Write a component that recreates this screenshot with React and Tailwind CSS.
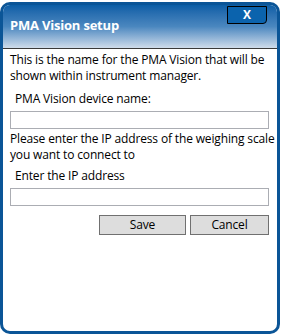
export default function App() {
  return (
    <div className="w-[282px] h-[336px] bg-white pt-[2px]" style={{ fontFamily: '"Open Sans", "Noto Sans", sans-serif' }}>
      <div className="relative w-[280px] h-[332px] border-[3px] border-[#0b5597] rounded-[10px] overflow-hidden bg-white flex flex-col">
        {/* Title bar */}
        <div className="h-[44px] shrink-0 bg-gradient-to-b from-[#0a5ea6] via-[#4a87bf] to-[#cfdcea] border-b border-[#3a3a3a] pl-[7px] pt-[7px]">
          <span className="text-white font-bold text-[13px] tracking-[-0.2px]">PMA Vision setup</span>
        </div>
        <div className="absolute left-[224px] top-[1px] w-[40px] h-[18px] border border-black rounded-br-[4px] flex items-center justify-center bg-[#0b63ad]">
          <span className="text-white font-bold text-[12px] leading-none">X</span>
        </div>

        {/* Content */}
        <div className="flex flex-col px-[7px] pt-[3px] text-[12px] tracking-[-0.15px] text-black whitespace-nowrap">
          <p className="leading-[16px]">This is the name for the PMA Vision that will be<br />shown within instrument manager.</p>
          <p className="leading-[16px] mt-[7px] pl-[5px]">PMA Vision device name:</p>
          <div className="mt-[4px] h-[18px] w-[259px] border border-[#abadb3] bg-white"></div>
          <p className="leading-[16px] mt-[2px]">Please enter the IP address of the weighing scale<br />you want to connect to</p>
          <p className="leading-[16px] mt-[5px] pl-[5px]">Enter the IP address</p>
          <div className="mt-[4px] h-[18px] w-[259px] border border-[#abadb3] bg-white"></div>
          <div className="flex justify-end gap-[4px] mt-[9px] w-[259px]">
            <button className="w-[87px] h-[20px] bg-[#dddddd] border border-[#707070] text-[12px] leading-none">Save</button>
            <button className="w-[79px] h-[20px] bg-[#dddddd] border border-[#707070] text-[12px] leading-none">Cancel</button>
          </div>
        </div>
      </div>
    </div>
  );
}
